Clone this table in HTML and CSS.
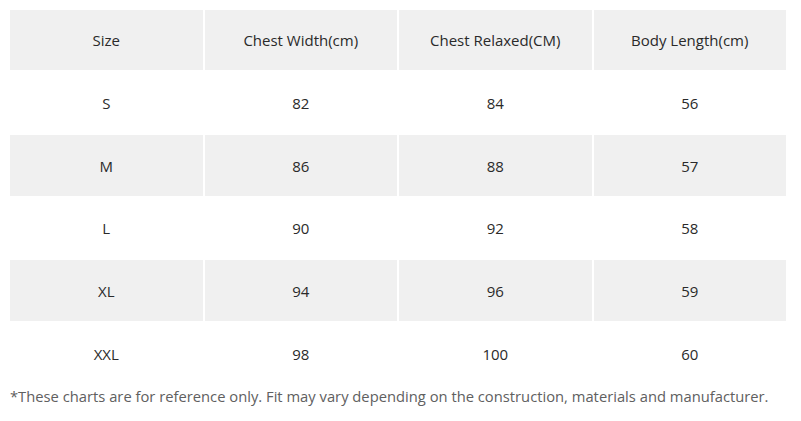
FILE: index.html
```html
<!DOCTYPE html>
<html>
<head>
<meta charset="utf-8">
<link rel="stylesheet" href="styles.css">
</head>
<body>
<table class="chart">
  <tr class="shade h60"><td>Size</td><td>Chest Width(cm)</td><td>Chest Relaxed(CM)</td><td>Body Length(cm)</td></tr>
  <tr class="h61"><td>S</td><td>82</td><td>84</td><td>56</td></tr>
  <tr class="shade h61"><td>M</td><td>86</td><td>88</td><td>57</td></tr>
  <tr class="h60"><td>L</td><td>90</td><td>92</td><td>58</td></tr>
  <tr class="shade h61"><td>XL</td><td>94</td><td>96</td><td>59</td></tr>
  <tr class="h61"><td>XXL</td><td>98</td><td>100</td><td>60</td></tr>
</table>
<p class="note">*These charts are for reference only. Fit may vary depending on the construction, materials and manufacturer.</p>
</body>
</html>
```
FILE: styles.css
```css
body {
  margin: 8px;
  background: #ffffff;
  font-family: "Open Sans", "Liberation Sans", sans-serif;
}
.chart {
  width: 780px;
  border-collapse: separate;
  border-spacing: 2px;
  table-layout: fixed;
}
.chart td {
  padding: 0;
  text-align: center;
  vertical-align: middle;
  font-size: 15px;
  color: #2a2a2a;
}
.h60 td { height: 60px; }
.h61 td { height: 61px; }
.shade td { background: #f0f0f0; }
.note {
  margin: 0 0 0 2px;
  font-size: 14.75px;
  line-height: 20px;
  color: #606060;
}
```
